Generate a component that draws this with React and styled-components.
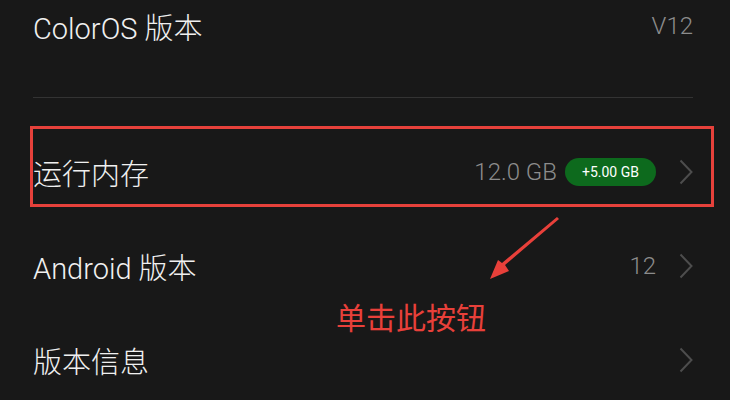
import React from "react";
import styled, { createGlobalStyle } from "styled-components";

const FONT = `Roboto, "Noto Sans CJK SC", "Noto Sans", sans-serif`;

const ROWS = [
  { title: "运行内存", value: "12.0 GB", badge: "+5.00 GB", arrow: true },
  { title: "Android 版本", value: "12", arrow: true },
  { title: "版本信息", arrow: true },
];

const GlobalStyle = createGlobalStyle`
  html, body {
    margin: 0;
    padding: 0;
    background: #181818;
  }
`;

const Screen = styled.div`
  position: relative;
  width: 730px;
  height: 400px;
  overflow: hidden;
  background: #181818;
  font-family: ${FONT};
`;

const List = styled.div`
  display: flex;
  flex-direction: column;
  padding: 0 37px 0 33px;
`;

const TopRow = styled.div`
  display: flex;
  align-items: center;
  justify-content: space-between;
  height: 52px;
`;

const Divider = styled.div`
  height: 1px;
  background: #333333;
  margin: 45px 0 27px;
`;

const Row = styled.div`
  display: flex;
  align-items: center;
  height: 94px;
  gap: 8px;
`;

const Title = styled.span`
  flex: 1;
  font-size: 29px;
  font-weight: 300;
  color: #f0f0f0;
`;

const Value = styled.span`
  font-size: 24px;
  font-weight: 300;
  color: #8c8c8c;
`;

const Badge = styled.span`
  display: inline-flex;
  align-items: center;
  justify-content: center;
  width: 91px;
  height: 28px;
  border-radius: 14px;
  background: #0d6a1d;
  color: #ffffff;
  font-size: 14px;
`;

const Chevron = styled.svg`
  width: 14px;
  height: 26px;
  margin-left: 15px;
  flex-shrink: 0;
`;

const Highlight = styled.div`
  position: absolute;
  left: 30px;
  top: 126px;
  width: 678px;
  height: 75px;
  border: 3px solid #e5413b;
`;

const Pointer = styled.svg`
  position: absolute;
  left: 484px;
  top: 214px;
`;

const Hint = styled.div`
  position: absolute;
  left: 336px;
  top: 300px;
  font-size: 30px;
  line-height: 1.1;
  color: #e8403a;
  font-family: "Noto Sans CJK SC", sans-serif;
`;

const ChevronIcon = () => (
  <Chevron viewBox="0 0 14 26">
    <path d="M1.5 1.5 L12.5 13 L1.5 24.5" fill="none" stroke="#4d4d4d" strokeWidth="2" />
  </Chevron>
);

export default function App() {
  return (
    <Screen>
      <GlobalStyle />
      <List>
        <TopRow>
          <Title>ColorOS 版本</Title>
          <Value>V12</Value>
        </TopRow>
        <Divider />
        {ROWS.map((row) => (
          <Row key={row.title}>
            <Title>{row.title}</Title>
            {row.value && <Value>{row.value}</Value>}
            {row.badge && <Badge>{row.badge}</Badge>}
            {row.arrow && <ChevronIcon />}
          </Row>
        ))}
      </List>
      <Highlight />
      <Pointer width="80" height="70" viewBox="0 0 80 70">
        <polygon points="73,3 75,5 21,51 25,57 6,65 14,46 18,49" fill="#e8403a" />
      </Pointer>
      <Hint>单击此按钮</Hint>
    </Screen>
  );
}
